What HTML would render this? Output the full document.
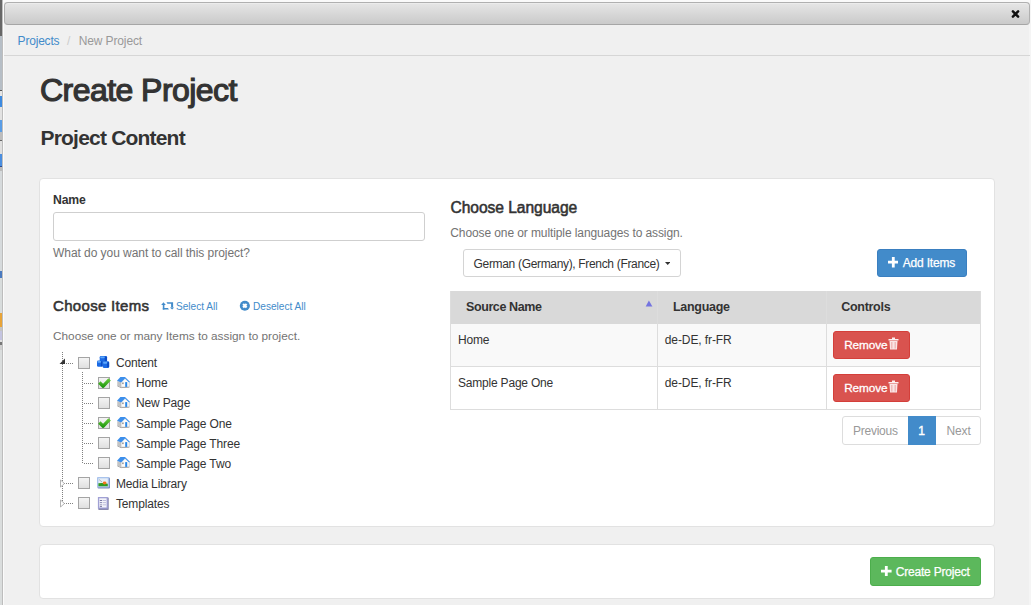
<!DOCTYPE html>
<html><head><meta charset="utf-8"><style>
html,body{margin:0;padding:0;width:1031px;height:605px;overflow:hidden;background:#f0f0f0}
.t{position:absolute;white-space:nowrap;line-height:1;font-family:"Liberation Sans",sans-serif}
.r{position:absolute}
svg.r{display:block}
</style></head><body>
<div class="r" style="left:0px;top:0px;width:2px;height:605px;background:#dadddd"></div>
<div class="r" style="left:0px;top:0px;width:2px;height:36px;background:#676767"></div>
<div class="r" style="left:0px;top:36px;width:2px;height:54px;background:#b6bec6"></div>
<div class="r" style="left:0px;top:90px;width:2px;height:1px;background:#555"></div>
<div class="r" style="left:0px;top:91px;width:2px;height:5px;background:#e6e6e6"></div>
<div class="r" style="left:0px;top:96px;width:2px;height:11px;background:#3d8ae0"></div>
<div class="r" style="left:0px;top:107px;width:2px;height:13px;background:#e2e2e2"></div>
<div class="r" style="left:0px;top:120px;width:2px;height:12px;background:#5a9de6"></div>
<div class="r" style="left:0px;top:132px;width:2px;height:8px;background:#bdbdbd"></div>
<div class="r" style="left:0px;top:140px;width:2px;height:1px;background:#666"></div>
<div class="r" style="left:0px;top:141px;width:2px;height:13px;background:#e0e0e0"></div>
<div class="r" style="left:0px;top:154px;width:2px;height:12px;background:#4a8ee0"></div>
<div class="r" style="left:0px;top:166px;width:2px;height:1px;background:#2a4a90"></div>
<div class="r" style="left:0px;top:167px;width:2px;height:4px;background:#bbbbbb"></div>
<div class="r" style="left:0px;top:171px;width:2px;height:100px;background:#d6dadc"></div>
<div class="r" style="left:0px;top:271px;width:2px;height:7px;background:#4a7ac0"></div>
<div class="r" style="left:0px;top:278px;width:2px;height:35px;background:#d8dcdc"></div>
<div class="r" style="left:0px;top:313px;width:2px;height:14px;background:#e8a438"></div>
<div class="r" style="left:0px;top:327px;width:2px;height:4px;background:#c4c4c4"></div>
<div class="r" style="left:0px;top:331px;width:2px;height:9px;background:#c4c4e0"></div>
<div class="r" style="left:0px;top:340px;width:2px;height:2px;background:#e0e0e0"></div>
<div class="r" style="left:0px;top:342px;width:2px;height:3px;background:#777"></div>
<div class="r" style="left:0px;top:345px;width:2px;height:5px;background:#cfcfcf"></div>
<div class="r" style="left:2px;top:0px;width:1px;height:605px;background:#bdbdbd"></div>
<div class="r" style="left:3px;top:0px;width:1px;height:605px;background:#fbfbfb"></div>
<div class="r" style="left:4px;top:0px;width:1025px;height:605px;background:#f0f0f0"></div>
<div class="r" style="left:1029px;top:0px;width:2px;height:605px;background:#f5f5f5"></div>
<div class="r" style="left:4px;top:0px;width:1026px;height:2px;background:#fafafa"></div>
<div class="r" style="left:4px;top:2px;width:1026px;height:22px;border:1px solid #b0b0b0;border-bottom-color:#a6a6a6;border-radius:4px;background:linear-gradient(#e6e6e6,#cacaca);box-shadow:inset 0 1px 0 #ececec;box-sizing:border-box;height:23px"></div>
<svg class="r" style="left:1010px;top:9px" width="11" height="10" viewBox="0 0 11 10"><path d="M2.9 2.3 L8.1 7.6 M8.1 2.3 L2.9 7.6" stroke="#111" stroke-width="2.5" stroke-linecap="round"/></svg>
<div class="t" style="left:17.6px;top:34.84px;font-size:12px;font-weight:normal;color:#428bca;letter-spacing:-0.2px;">Projects</div>
<div class="t" style="left:67px;top:34.84px;font-size:12px;font-weight:normal;color:#cccccc;letter-spacing:0px;">/</div>
<div class="t" style="left:78.7px;top:34.84px;font-size:12px;font-weight:normal;color:#999999;letter-spacing:-0.12px;">New Project</div>
<div class="r" style="left:4px;top:55px;width:1026px;height:1px;background:#d6d6d6"></div>
<div class="t" style="left:40px;top:73.91px;font-size:32px;font-weight:normal;color:#333;letter-spacing:-0.55px;-webkit-text-stroke:1.2px #333;">Create Project</div>
<div class="t" style="left:40.5px;top:127.22px;font-size:21px;font-weight:bold;color:#333;letter-spacing:-0.8px;">Project Content</div>
<div class="r" style="left:39px;top:178px;width:956px;height:349px;background:#fff;border:1px solid #e2e2e2;border-radius:4px;box-sizing:border-box"></div>
<div class="t" style="left:53px;top:193.97px;font-size:12.2px;font-weight:bold;color:#333;letter-spacing:-0.15px;">Name</div>
<div class="r" style="left:53px;top:212px;width:372px;height:29px;border:1px solid #cfcfcf;border-radius:3px;box-sizing:border-box;background:#fff"></div>
<div class="t" style="left:53px;top:247.34px;font-size:12px;font-weight:normal;color:#737373;letter-spacing:-0.05px;">What do you want to call this project?</div>
<div class="t" style="left:53.1px;top:298.30px;font-size:15px;font-weight:normal;color:#333;letter-spacing:0.3px;-webkit-text-stroke:0.55px #333;">Choose Items</div>
<svg class="r" style="left:158px;top:298px" width="18" height="16" viewBox="0 0 18 16"><path d="M3.2 6.9 L5.5 4.3 L7.8 6.9 Z" fill="#428bca"/><rect x="4.8" y="6.5" width="1.6" height="5.1" fill="#428bca"/><path d="M4.8 10 H10 L10.9 11.6 H4.8Z" fill="#428bca"/><path d="M8.5 4.2 H15.1 V9.6 H13.1 V5.8 H9.4Z" fill="#428bca"/><path d="M11.9 9.4 L14.1 11.6 L16.1 9.4Z" fill="#428bca"/></svg>
<div class="t" style="left:176px;top:301.85px;font-size:10.1px;font-weight:normal;color:#428bca;letter-spacing:0px;">Select All</div>
<svg class="r" style="left:236px;top:298px" width="18" height="16" viewBox="0 0 18 16"><circle cx="8.85" cy="7.7" r="5.05" fill="#428bca"/><path d="M7.1 5.9 L10.6 9.5 M10.6 5.9 L7.1 9.5" stroke="#fff" stroke-width="2.2"/></svg>
<div class="t" style="left:253px;top:301.85px;font-size:10.1px;font-weight:normal;color:#428bca;letter-spacing:0px;">Deselect All</div>
<div class="t" style="left:53px;top:331.31px;font-size:11.8px;font-weight:normal;color:#737373;letter-spacing:0px;">Choose one or many Items to assign to project.</div>
<div class="r" style="left:62px;top:352px;width:1px;height:152px;background:repeating-linear-gradient(#808080 0 1px, transparent 1px 2px)"></div>
<div class="r" style="left:64px;top:363px;width:10px;height:1px;background:repeating-linear-gradient(90deg,#808080 0 1px, transparent 1px 2px)"></div>
<svg class="r" style="left:59px;top:358px" width="7" height="7" viewBox="0 0 7 7"><path d="M6 0.5 L6 6 L0.5 6Z" fill="#333"/></svg>
<div class="r" style="left:78px;top:357px;width:12px;height:12px;border:1px solid #a4a4a4;box-sizing:border-box;background:linear-gradient(#f4f4f4,#e0e0e0)"></div>
<svg class="r" style="left:97px;top:356px" width="13" height="13" viewBox="0 0 13 13"><rect x="2.7" y="0" width="7.4" height="5.8" rx="1.3" fill="#1b6ae4"/><rect x="7.73" y="0.6" width="2.22" height="4.8" rx="0.8" fill="#0c4cc4"/><rect x="3.2" y="0.4" width="4.59" height="1.74" rx="0.8" fill="#5ea8fa"/><rect x="0" y="4.6" width="5.8" height="6.2" rx="1.3" fill="#1b6ae4"/><rect x="3.94" y="5.199999999999999" width="1.74" height="5.2" rx="0.8" fill="#0c4cc4"/><rect x="0.5" y="5.0" width="3.60" height="1.86" rx="0.8" fill="#5ea8fa"/><rect x="5.6" y="5.3" width="6.6" height="6.6" rx="1.3" fill="#1b6ae4"/><rect x="10.09" y="5.8999999999999995" width="1.98" height="5.6" rx="0.8" fill="#0c4cc4"/><rect x="6.1" y="5.7" width="4.09" height="1.98" rx="0.8" fill="#5ea8fa"/></svg>
<div class="t" style="left:116px;top:357.14px;font-size:12px;font-weight:normal;color:#333;letter-spacing:-0.15px;">Content</div>
<div class="r" style="left:82px;top:372px;width:1px;height:92px;background:repeating-linear-gradient(#808080 0 1px, transparent 1px 2px)"></div>
<div class="r" style="left:84px;top:383px;width:10px;height:1px;background:repeating-linear-gradient(90deg,#808080 0 1px, transparent 1px 2px)"></div>
<div class="r" style="left:98px;top:377px;width:12px;height:12px;border:1px solid #a4a4a4;box-sizing:border-box;background:linear-gradient(#f4f4f4,#e0e0e0)"></div>
<svg class="r" style="left:97px;top:376px" width="15" height="14" viewBox="0 0 15 14"><defs><linearGradient id="gc" gradientUnits="userSpaceOnUse" x1="0" y1="2" x2="0" y2="12"><stop offset="0" stop-color="#6fd040"/><stop offset="1" stop-color="#159008"/></linearGradient></defs><path d="M2.3 6.6 L6.2 10.2 L12.6 3.3" fill="none" stroke="url(#gc)" stroke-width="3.4" stroke-linejoin="round"/></svg>
<svg class="r" style="left:117px;top:377px" width="14" height="12" viewBox="0 0 14 12"><path d="M0.3 8.8 L4.1 10.6 L12.4 10.1" fill="none" stroke="#9a9a9a" stroke-width="1"/><path d="M0.2 4 L4.1 5.3 L4.1 10.2 L0.3 8.8 Z" fill="#c4c4c4"/><path d="M4.1 5.3 L8 1.4 L12.3 5.2 L12.3 9.8 L4.1 10.2 Z" fill="#fbfbfb" stroke="#b0b0b0" stroke-width="0.5"/><path d="M0 3.7 L3.4 0 L8 0 L12.9 4.8 L12.2 5.4 L8 1.5 L4.1 5.4 Z" fill="#3d8feb"/><rect x="8.2" y="5.1" width="2" height="4.8" fill="#2a88e8"/><rect x="5.2" y="5.5" width="1.4" height="1.6" fill="#8c8c8c"/></svg>
<div class="t" style="left:136px;top:377.34px;font-size:12px;font-weight:normal;color:#333;letter-spacing:-0.15px;">Home</div>
<div class="r" style="left:84px;top:403px;width:10px;height:1px;background:repeating-linear-gradient(90deg,#808080 0 1px, transparent 1px 2px)"></div>
<div class="r" style="left:98px;top:397px;width:12px;height:12px;border:1px solid #a4a4a4;box-sizing:border-box;background:linear-gradient(#f4f4f4,#e0e0e0)"></div>
<svg class="r" style="left:117px;top:397px" width="14" height="12" viewBox="0 0 14 12"><path d="M0.3 8.8 L4.1 10.6 L12.4 10.1" fill="none" stroke="#9a9a9a" stroke-width="1"/><path d="M0.2 4 L4.1 5.3 L4.1 10.2 L0.3 8.8 Z" fill="#c4c4c4"/><path d="M4.1 5.3 L8 1.4 L12.3 5.2 L12.3 9.8 L4.1 10.2 Z" fill="#fbfbfb" stroke="#b0b0b0" stroke-width="0.5"/><path d="M0 3.7 L3.4 0 L8 0 L12.9 4.8 L12.2 5.4 L8 1.5 L4.1 5.4 Z" fill="#3d8feb"/><rect x="8.2" y="5.1" width="2" height="4.8" fill="#2a88e8"/><rect x="5.2" y="5.5" width="1.4" height="1.6" fill="#8c8c8c"/></svg>
<div class="t" style="left:136px;top:397.44px;font-size:12px;font-weight:normal;color:#333;letter-spacing:-0.15px;">New Page</div>
<div class="r" style="left:84px;top:423px;width:10px;height:1px;background:repeating-linear-gradient(90deg,#808080 0 1px, transparent 1px 2px)"></div>
<div class="r" style="left:98px;top:417px;width:12px;height:12px;border:1px solid #a4a4a4;box-sizing:border-box;background:linear-gradient(#f4f4f4,#e0e0e0)"></div>
<svg class="r" style="left:97px;top:416px" width="15" height="14" viewBox="0 0 15 14"><defs><linearGradient id="gc" gradientUnits="userSpaceOnUse" x1="0" y1="2" x2="0" y2="12"><stop offset="0" stop-color="#6fd040"/><stop offset="1" stop-color="#159008"/></linearGradient></defs><path d="M2.3 6.6 L6.2 10.2 L12.6 3.3" fill="none" stroke="url(#gc)" stroke-width="3.4" stroke-linejoin="round"/></svg>
<svg class="r" style="left:117px;top:417px" width="14" height="12" viewBox="0 0 14 12"><path d="M0.3 8.8 L4.1 10.6 L12.4 10.1" fill="none" stroke="#9a9a9a" stroke-width="1"/><path d="M0.2 4 L4.1 5.3 L4.1 10.2 L0.3 8.8 Z" fill="#c4c4c4"/><path d="M4.1 5.3 L8 1.4 L12.3 5.2 L12.3 9.8 L4.1 10.2 Z" fill="#fbfbfb" stroke="#b0b0b0" stroke-width="0.5"/><path d="M0 3.7 L3.4 0 L8 0 L12.9 4.8 L12.2 5.4 L8 1.5 L4.1 5.4 Z" fill="#3d8feb"/><rect x="8.2" y="5.1" width="2" height="4.8" fill="#2a88e8"/><rect x="5.2" y="5.5" width="1.4" height="1.6" fill="#8c8c8c"/></svg>
<div class="t" style="left:136px;top:417.54px;font-size:12px;font-weight:normal;color:#333;letter-spacing:-0.15px;">Sample Page One</div>
<div class="r" style="left:84px;top:443px;width:10px;height:1px;background:repeating-linear-gradient(90deg,#808080 0 1px, transparent 1px 2px)"></div>
<div class="r" style="left:98px;top:437px;width:12px;height:12px;border:1px solid #a4a4a4;box-sizing:border-box;background:linear-gradient(#f4f4f4,#e0e0e0)"></div>
<svg class="r" style="left:117px;top:437px" width="14" height="12" viewBox="0 0 14 12"><path d="M0.3 8.8 L4.1 10.6 L12.4 10.1" fill="none" stroke="#9a9a9a" stroke-width="1"/><path d="M0.2 4 L4.1 5.3 L4.1 10.2 L0.3 8.8 Z" fill="#c4c4c4"/><path d="M4.1 5.3 L8 1.4 L12.3 5.2 L12.3 9.8 L4.1 10.2 Z" fill="#fbfbfb" stroke="#b0b0b0" stroke-width="0.5"/><path d="M0 3.7 L3.4 0 L8 0 L12.9 4.8 L12.2 5.4 L8 1.5 L4.1 5.4 Z" fill="#3d8feb"/><rect x="8.2" y="5.1" width="2" height="4.8" fill="#2a88e8"/><rect x="5.2" y="5.5" width="1.4" height="1.6" fill="#8c8c8c"/></svg>
<div class="t" style="left:136px;top:437.64px;font-size:12px;font-weight:normal;color:#333;letter-spacing:-0.15px;">Sample Page Three</div>
<div class="r" style="left:84px;top:463px;width:10px;height:1px;background:repeating-linear-gradient(90deg,#808080 0 1px, transparent 1px 2px)"></div>
<div class="r" style="left:98px;top:457px;width:12px;height:12px;border:1px solid #a4a4a4;box-sizing:border-box;background:linear-gradient(#f4f4f4,#e0e0e0)"></div>
<svg class="r" style="left:117px;top:457px" width="14" height="12" viewBox="0 0 14 12"><path d="M0.3 8.8 L4.1 10.6 L12.4 10.1" fill="none" stroke="#9a9a9a" stroke-width="1"/><path d="M0.2 4 L4.1 5.3 L4.1 10.2 L0.3 8.8 Z" fill="#c4c4c4"/><path d="M4.1 5.3 L8 1.4 L12.3 5.2 L12.3 9.8 L4.1 10.2 Z" fill="#fbfbfb" stroke="#b0b0b0" stroke-width="0.5"/><path d="M0 3.7 L3.4 0 L8 0 L12.9 4.8 L12.2 5.4 L8 1.5 L4.1 5.4 Z" fill="#3d8feb"/><rect x="8.2" y="5.1" width="2" height="4.8" fill="#2a88e8"/><rect x="5.2" y="5.5" width="1.4" height="1.6" fill="#8c8c8c"/></svg>
<div class="t" style="left:136px;top:457.74px;font-size:12px;font-weight:normal;color:#333;letter-spacing:-0.15px;">Sample Page Two</div>
<div class="r" style="left:64px;top:483px;width:10px;height:1px;background:repeating-linear-gradient(90deg,#808080 0 1px, transparent 1px 2px)"></div>
<svg class="r" style="left:60px;top:479px" width="5" height="9" viewBox="0 0 5 9"><path d="M0.5 1 L4.5 4.5 L0.5 8Z" fill="#fff" stroke="#a0a0a0" stroke-width="0.8"/></svg>
<div class="r" style="left:78px;top:477px;width:12px;height:12px;border:1px solid #a4a4a4;box-sizing:border-box;background:linear-gradient(#f4f4f4,#e0e0e0)"></div>
<svg class="r" style="left:97px;top:477px" width="13" height="12" viewBox="0 0 13 12"><rect x="0.5" y="0.5" width="12.5" height="11" rx="1" fill="#7a8ab8"/><rect x="0" y="0" width="12.2" height="10.6" rx="1" fill="#a9c3ec"/><rect x="1.4" y="1.3" width="9.4" height="8" fill="#e6eef8"/><path d="M2 2.5 L5 5" stroke="#9aa" stroke-width="0.8"/><path d="M1.4 6.3 Q6 5.6 10.8 6.8 V9.3 H1.4Z" fill="#2e9a22"/><ellipse cx="7.6" cy="6" rx="1.9" ry="1.4" fill="#f2741e"/></svg>
<div class="t" style="left:116px;top:477.84px;font-size:12px;font-weight:normal;color:#333;letter-spacing:-0.15px;">Media Library</div>
<div class="r" style="left:64px;top:503px;width:10px;height:1px;background:repeating-linear-gradient(90deg,#808080 0 1px, transparent 1px 2px)"></div>
<svg class="r" style="left:60px;top:499px" width="5" height="9" viewBox="0 0 5 9"><path d="M0.5 1 L4.5 4.5 L0.5 8Z" fill="#fff" stroke="#a0a0a0" stroke-width="0.8"/></svg>
<div class="r" style="left:78px;top:497px;width:12px;height:12px;border:1px solid #a4a4a4;box-sizing:border-box;background:linear-gradient(#f4f4f4,#e0e0e0)"></div>
<svg class="r" style="left:97px;top:497px" width="12" height="13" viewBox="0 0 12 13"><rect x="1.4" y="0.6" width="10.2" height="12.2" fill="#6e6e9a"/><rect x="0.9" y="0" width="10" height="11.8" fill="#a0a0d4"/><rect x="2.2" y="1.3" width="7.4" height="9.2" fill="#f4f4fa"/><rect x="2.8" y="3" width="2.2" height="0.9" fill="#6a6a98"/><rect x="5.6" y="3" width="3.4" height="0.9" fill="#b8b8d8"/><rect x="2.8" y="5.2" width="2.2" height="0.9" fill="#7a7aa8"/><rect x="5.6" y="5.2" width="3.4" height="0.9" fill="#b8b8d8"/><rect x="2.8" y="7.4" width="2.2" height="0.9" fill="#8a8ab0"/><rect x="5.6" y="7.4" width="3.4" height="0.9" fill="#b8b8d8"/><rect x="2.8" y="9" width="2.2" height="0.8" fill="#6a6a98"/></svg>
<div class="t" style="left:116px;top:497.94px;font-size:12px;font-weight:normal;color:#333;letter-spacing:-0.15px;">Templates</div>
<div class="t" style="left:450.5px;top:199.59px;font-size:15.6px;font-weight:normal;color:#333;letter-spacing:-0.05px;-webkit-text-stroke:0.55px #333;">Choose Language</div>
<div class="t" style="left:450.3px;top:226.84px;font-size:12px;font-weight:normal;color:#737373;letter-spacing:-0.1px;">Choose one or multiple languages to assign.</div>
<div class="r" style="left:463px;top:249px;width:218px;height:28px;border:1px solid #d4d4d4;border-radius:3px;box-sizing:border-box;background:#fff"></div>
<div class="t" style="left:473.6px;top:257.84px;font-size:12px;font-weight:normal;color:#333;letter-spacing:-0.33px;">German (Germany), French (France)</div>
<svg class="r" style="left:664.5px;top:262.3px" width="5.4" height="3" viewBox="0 0 5.4 3"><path d="M0 0 H5.4 L2.7 3Z" fill="#333"/></svg>
<div class="r" style="left:877px;top:249px;width:90px;height:28px;background:#428bca;border:1px solid #3a7fc0;border-radius:3px;box-sizing:border-box"></div>
<svg class="r" style="left:887.8px;top:257.3px" width="10.6" height="10.4" viewBox="0 0 10.6 10.4"><path d="M3.9 0 H6.7 V3.8 H10.6 V6.6 H6.7 V10.4 H3.9 V6.6 H0 V3.8 H3.9Z" fill="#fff"/></svg>
<div class="t" style="left:902.8px;top:257.14px;font-size:12px;font-weight:normal;color:#fff;letter-spacing:-0.2px;-webkit-text-stroke:0.25px #fff;">Add Items</div>
<div class="r" style="left:450px;top:291px;width:531px;height:33px;background:#d9d9d9"></div>
<div class="r" style="left:450px;top:324px;width:531px;height:43px;background:#f9f9f9"></div>
<div class="r" style="left:450px;top:367px;width:531px;height:43px;background:#fff"></div>
<div class="r" style="left:450px;top:291px;width:1px;height:119px;background:#dddddd"></div>
<div class="r" style="left:980px;top:291px;width:1px;height:119px;background:#dddddd"></div>
<div class="r" style="left:657px;top:291px;width:1px;height:119px;background:#dddddd"></div>
<div class="r" style="left:826px;top:291px;width:1px;height:119px;background:#dddddd"></div>
<div class="r" style="left:450px;top:366px;width:531px;height:1px;background:#dddddd"></div>
<div class="r" style="left:450px;top:409px;width:531px;height:1px;background:#dddddd"></div>
<div class="t" style="left:466px;top:300.62px;font-size:12.5px;font-weight:bold;color:#333;letter-spacing:-0.4px;">Source Name</div>
<div class="t" style="left:673px;top:300.62px;font-size:12.5px;font-weight:bold;color:#333;letter-spacing:-0.3px;">Language</div>
<div class="t" style="left:841.3px;top:300.62px;font-size:12.5px;font-weight:bold;color:#333;letter-spacing:-0.3px;">Controls</div>
<svg class="r" style="left:645px;top:300px" width="8" height="7" viewBox="0 0 8 7"><path d="M0.7 6.6 L3.9 0.6 L7.4 6.6Z" fill="#7474e0"/></svg>
<div class="t" style="left:458px;top:333.84px;font-size:12px;font-weight:normal;color:#333;letter-spacing:-0.2px;">Home</div>
<div class="t" style="left:664.8px;top:333.84px;font-size:12px;font-weight:normal;color:#333;letter-spacing:-0.1px;">de-DE, fr-FR</div>
<div class="r" style="left:833px;top:331px;width:77px;height:28px;background:#d9534f;border:1px solid #d43f3a;border-radius:3px;box-sizing:border-box"></div>
<div class="t" style="left:844.2px;top:339.61px;font-size:11.8px;font-weight:normal;color:#fff;letter-spacing:-0.1px;-webkit-text-stroke:0.3px #fff;">Remove</div>
<svg class="r" style="left:888px;top:337px" width="11" height="13" viewBox="0 0 11 13"><rect x="0.5" y="2" width="10" height="1.5" fill="#fff" opacity="0.9"/><rect x="4" y="0.5" width="3" height="1.5" fill="#fff" opacity="0.9"/><path d="M1.5 4 H9.5 L9 12.5 H2Z" fill="#fff" opacity="0.85"/><rect x="3.6" y="5" width="0.6" height="6.5" fill="#d9534f" opacity="0.7"/><rect x="6.8" y="5" width="0.6" height="6.5" fill="#d9534f" opacity="0.7"/></svg>
<div class="t" style="left:458px;top:376.84px;font-size:12px;font-weight:normal;color:#333;letter-spacing:-0.2px;">Sample Page One</div>
<div class="t" style="left:664.8px;top:376.84px;font-size:12px;font-weight:normal;color:#333;letter-spacing:-0.1px;">de-DE, fr-FR</div>
<div class="r" style="left:833px;top:374px;width:77px;height:28px;background:#d9534f;border:1px solid #d43f3a;border-radius:3px;box-sizing:border-box"></div>
<div class="t" style="left:844.2px;top:382.61px;font-size:11.8px;font-weight:normal;color:#fff;letter-spacing:-0.1px;-webkit-text-stroke:0.3px #fff;">Remove</div>
<svg class="r" style="left:888px;top:380px" width="11" height="13" viewBox="0 0 11 13"><rect x="0.5" y="2" width="10" height="1.5" fill="#fff" opacity="0.9"/><rect x="4" y="0.5" width="3" height="1.5" fill="#fff" opacity="0.9"/><path d="M1.5 4 H9.5 L9 12.5 H2Z" fill="#fff" opacity="0.85"/><rect x="3.6" y="5" width="0.6" height="6.5" fill="#d9534f" opacity="0.7"/><rect x="6.8" y="5" width="0.6" height="6.5" fill="#d9534f" opacity="0.7"/></svg>
<div class="r" style="left:842px;top:416px;width:139px;height:29px;border:1px solid #dddddd;border-radius:3px;box-sizing:border-box;background:#fff"></div>
<div class="r" style="left:908px;top:416px;width:28px;height:29px;background:#428bca"></div>
<div class="t" style="left:853px;top:424.84px;font-size:12px;font-weight:normal;color:#999;letter-spacing:-0.25px;">Previous</div>
<div class="t" style="left:918.3px;top:424.84px;font-size:12px;font-weight:normal;color:#fff;letter-spacing:0px;-webkit-text-stroke:0.4px #fff;">1</div>
<div class="t" style="left:946.4px;top:424.84px;font-size:12px;font-weight:normal;color:#999;letter-spacing:-0.1px;">Next</div>
<div class="r" style="left:39px;top:544px;width:956px;height:55px;background:#fff;border:1px solid #e2e2e2;border-radius:4px;box-sizing:border-box"></div>
<div class="r" style="left:870px;top:557px;width:111px;height:29px;background:#5cb85c;border:1px solid #4cae4c;border-radius:3px;box-sizing:border-box"></div>
<svg class="r" style="left:881px;top:566px" width="10.6" height="10.4" viewBox="0 0 10.6 10.4"><path d="M3.9 0 H6.7 V3.8 H10.6 V6.6 H6.7 V10.4 H3.9 V6.6 H0 V3.8 H3.9Z" fill="#fff"/></svg>
<div class="t" style="left:895.7px;top:565.84px;font-size:12px;font-weight:normal;color:#fff;letter-spacing:-0.2px;-webkit-text-stroke:0.25px #fff;">Create Project</div>
</body></html>
